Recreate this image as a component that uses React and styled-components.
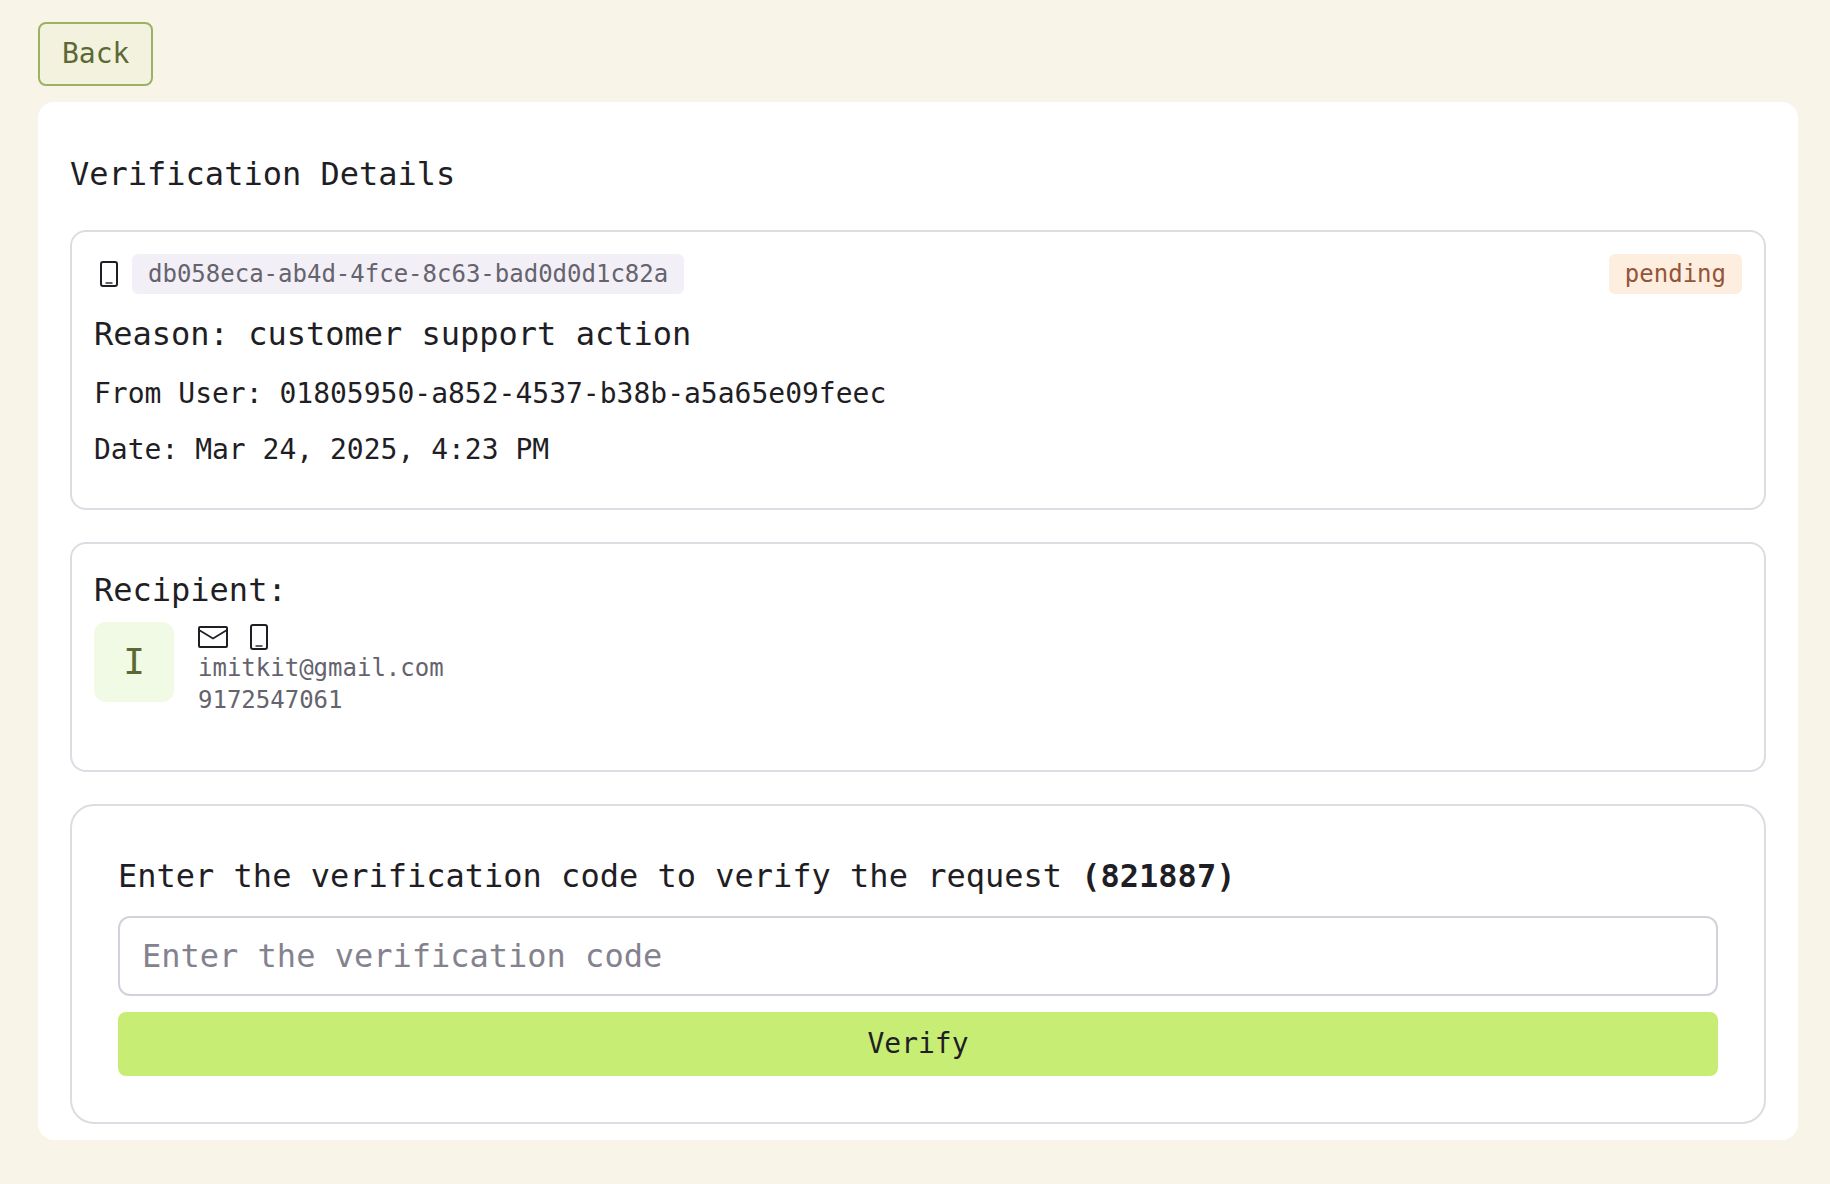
import React from "react";
import styled, { createGlobalStyle } from "styled-components";

const GlobalStyle = createGlobalStyle`
  * { box-sizing: border-box; }
  body {
    margin: 0;
    background: #f9f4e8;
    color: #1f1e25;
    font-family: Menlo, "DejaVu Sans Mono", monospace;
    font-size: 28px;
    line-height: 40px;
    -webkit-font-smoothing: antialiased;
  }
  button, input { font: inherit; }
`;

const Page = styled.div`
  display: flex;
  flex-direction: column;
  align-items: flex-start;
  gap: 16px;
  padding: 22px 32px 44px 38px;
`;

const Button = styled.button`
  height: 64px;
  padding: 0 22px;
  border: 2px solid ${(p) => (p.$primary ? "#c7ed75" : "#9cb163")};
  border-radius: 8px;
  background: ${(p) => (p.$primary ? "#c7ed75" : "#f3f2df")};
  color: ${(p) => (p.$primary ? "#1f1e25" : "#5d6934")};
  cursor: pointer;
`;

const Panel = styled.main`
  display: flex;
  flex-direction: column;
  gap: 32px;
  width: 100%;
  padding: 48px 32px 16px;
  border-radius: 16px;
  background: #ffffff;
`;

const Heading = styled.h1`
  margin: 0;
  font-size: 32px;
  font-weight: 400;
  line-height: 48px;
`;

const Card = styled.section`
  display: flex;
  flex-direction: column;
  gap: ${(p) => p.$gap || 16}px;
  padding: 22px 22px ${(p) => p.$bottom || 38}px;
  border: 2px solid #dddce3;
  border-radius: 16px;
`;

const FormCard = styled.form`
  display: flex;
  flex-direction: column;
  gap: 16px;
  padding: 46px;
  border: 2px solid #dddce3;
  border-radius: 24px;
`;

const TopRow = styled.div`
  display: flex;
  align-items: center;
  justify-content: space-between;
`;

const Identity = styled.div`
  display: flex;
  align-items: center;
  gap: 8px;
`;

const Badge = styled.span`
  height: 40px;
  padding: 0 16px;
  border-radius: 6px;
  background: ${(p) => (p.$warning ? "#feeedf" : "#f2eff6")};
  color: ${(p) => (p.$warning ? "#955439" : "#65636d")};
  font-size: 24px;
`;

const Subheading = styled.h2`
  margin: 0;
  font-size: 32px;
  font-weight: 400;
  line-height: 48px;
`;

const Line = styled.p`
  margin: 0;
`;

const Recipient = styled.div`
  display: flex;
  gap: 24px;
`;

const Avatar = styled.div`
  display: flex;
  align-items: center;
  justify-content: center;
  width: 80px;
  height: 80px;
  border-radius: 12px;
  background: #f0fae4;
  color: #5d6934;
  font-size: 36px;
`;

const Contact = styled.div`
  display: flex;
  flex-direction: column;
  color: #65636d;
  font-size: 24px;
  line-height: 32px;
`;

const Channels = styled.div`
  display: flex;
  align-items: center;
  gap: 16px;
  height: 30px;
  color: #1f1e25;
`;

const Icon = styled.svg`
  display: block;
  width: 30px;
  height: 30px;
  fill: none;
  stroke: currentColor;
  stroke-width: 2;
`;

const Label = styled.label`
  font-size: 32px;
  line-height: 48px;
`;

const Input = styled.input`
  width: 100%;
  height: 80px;
  padding: 0 22px;
  border: 2px solid #d3d2db;
  border-radius: 12px;
  background: #ffffff;
  color: inherit;
  font-size: 32px;
  &::placeholder { color: #84828e; opacity: 1; }
`;

const PhoneIcon = () => (
  <Icon viewBox="0 0 30 30" role="img" aria-label="Phone">
    <rect x="7" y="3" width="16" height="24" rx="2" />
    <path d="M11.5 24H18.5" strokeOpacity="0.7" />
  </Icon>
);

const MailIcon = () => (
  <Icon viewBox="0 0 30 30" role="img" aria-label="Email">
    <rect x="1" y="5" width="28" height="20" rx="1" />
    <path d="M1 8L15 16.5L29 8" strokeWidth="1.7" />
  </Icon>
);

export default function App() {
  return (
    <>
      <GlobalStyle />
      <Page>
        <Button type="button">Back</Button>
        <Panel>
          <Heading>Verification Details</Heading>
          <Card>
            <TopRow>
              <Identity>
                <PhoneIcon />
                <Badge>db058eca-ab4d-4fce-8c63-bad0d0d1c82a</Badge>
              </Identity>
              <Badge $warning>pending</Badge>
            </TopRow>
            <Subheading>Reason: customer support action</Subheading>
            <Line>From User: 01805950-a852-4537-b38b-a5a65e09feec</Line>
            <Line>Date: Mar 24, 2025, 4:23 PM</Line>
          </Card>
          <Card $gap={8} $bottom={54}>
            <Subheading>Recipient:</Subheading>
            <Recipient>
              <Avatar>I</Avatar>
              <Contact>
                <Channels>
                  <MailIcon />
                  <PhoneIcon />
                </Channels>
                <span>imitkit@gmail.com</span>
                <span>9172547061</span>
              </Contact>
            </Recipient>
          </Card>
          <FormCard onSubmit={(e) => e.preventDefault()}>
            <Label htmlFor="code">
              Enter the verification code to verify the request <b>(821887)</b>
            </Label>
            <Input id="code" type="text" placeholder="Enter the verification code" />
            <Button type="submit" $primary>Verify</Button>
          </FormCard>
        </Panel>
      </Page>
    </>
  );
}
